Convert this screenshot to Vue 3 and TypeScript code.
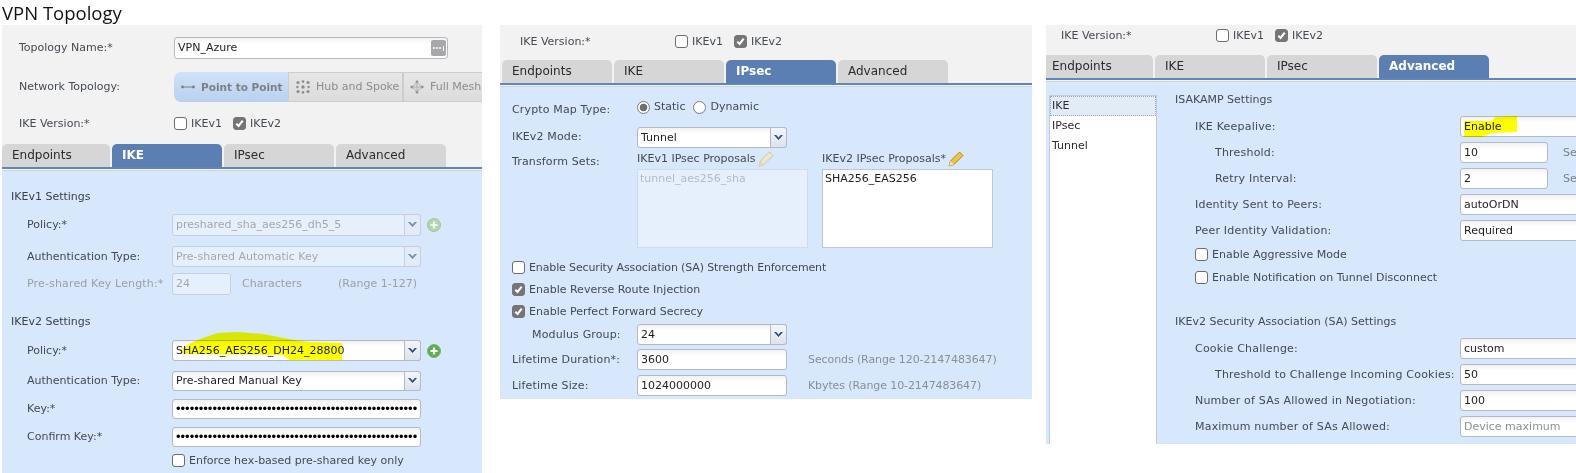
<script setup lang="ts">
const dots = '•'.repeat(53)
const tabNames = ['Endpoints', 'IKE', 'IPsec', 'Advanced']
</script>

<template>
  <div class="page">
    <!-- Panel 1 -->
    <section class="col col1">
      <h1 class="title">VPN Topology</h1>
      <div class="panel p1">
        <div class="head h1">
          <div class="hrow r-name">
            <span class="hlabel">Topology Name:*</span>
            <div class="field name"><span>VPN_Azure</span>
              <span class="more"><i></i><i></i><i></i><b></b></span>
            </div>
          </div>
          <div class="hrow r-net">
            <span class="hlabel">Network Topology:</span>
            <div class="seg">
              <span class="sg on">
                <svg width="14" height="6" viewBox="0 0 14 6"><path d="M1.500 3h11" stroke="#7a7f86" stroke-width="1"/><circle cx="1.500" cy="3" r="1.400" fill="#7a7f86"/><circle cx="12.500" cy="3" r="1.400" fill="#7a7f86"/></svg>
                Point to Point</span>
              <span class="sg hub">
                <svg width="14" height="14" viewBox="0 0 14 14" fill="#8e8e8e"><circle cx="7" cy="7" r="1.700"/><circle cx="2" cy="2.500" r="1.600"/><circle cx="7" cy="1.600" r="1.300"/><circle cx="12" cy="2.500" r="1.600"/><circle cx="2" cy="11.500" r="1.600"/><circle cx="7" cy="12.400" r="1.300"/><circle cx="12" cy="11.500" r="1.600"/><circle cx="1.400" cy="7" r="1.200"/><circle cx="12.600" cy="7" r="1.200"/></svg>
                Hub and Spoke</span>
              <span class="sg mesh">
                <svg width="14" height="14" viewBox="0 0 14 14"><path d="M7 2.500v9M2.500 7h9M2.500 7 7 2.500 11.500 7 7 11.500Z" fill="none" stroke="#a8a8a8" stroke-width=".9"/><path d="M7 0 9 2.500H5ZM7 14 9 11.500H5ZM0 7 2.500 5V9ZM14 7 11.500 5V9Z" fill="#8a8a8a"/></svg>
                Full Mesh</span>
            </div>
          </div>
          <div class="hrow r-ver">
            <span class="hlabel">IKE Version:*</span>
            <span class="ck"><i class="box"></i>IKEv1</span>
            <span class="ck"><i class="box on"><svg viewBox="0 0 12 12"><path d="M2.500 6.200 5 8.700 9.500 2.800" fill="none" stroke="#fff" stroke-width="2.200"/></svg></i>IKEv2</span>
          </div>
          <nav class="tabs">
            <span v-for="t in tabNames" :key="t" class="tab" :class="{ active: t === 'IKE' }">{{ t }}</span>
          </nav>
        </div>
        <div class="rule"></div>
        <div class="body b1">
          <div class="sect s1">IKEv1 Settings</div>
          <div class="frow m9 tall dim">
            <span class="flabel">Policy:*</span>
            <div class="field sel off w249"><span>preshared_sha_aes256_dh5_5</span><span class="caret"><svg width="9" height="6" viewBox="0 0 9 6"><path d="M0 0 4.500 5 9 0 6.800 0 4.500 2.600 2.200 0Z"/></svg></span></div>
            <svg class="plus" width="14" height="14" viewBox="0 0 14 14"><circle cx="7" cy="7" r="6.500" fill="#b5d3ad" stroke="#a3c49c"/><path d="M7 3.500v7M3.500 7h7" stroke="#eef6ec" stroke-width="2.200"/></svg>
          </div>
          <div class="frow m10">
            <span class="flabel">Authentication Type:</span>
            <div class="field sel off w249"><span>Pre-shared Automatic Key</span><span class="caret"><svg width="9" height="6" viewBox="0 0 9 6"><path d="M0 0 4.500 5 9 0 6.800 0 4.500 2.600 2.200 0Z"/></svg></span></div>
          </div>
          <div class="frow m6 tall">
            <span class="flabel muted">Pre-shared Key Length:*</span>
            <div class="field off w59"><span>24</span></div>
            <span class="hint chars">Characters</span>
            <span class="hint range">(Range 1-127)</span>
          </div>
          <div class="sect s2">IKEv2 Settings</div>
          <div class="frow m10">
            <span class="flabel">Policy:*</span>
            <div class="field sel w249 marked"><span>SHA256_AES256_DH24_28800</span><span class="caret"><svg width="9" height="6" viewBox="0 0 9 6"><path d="M0 0 4.500 5 9 0 6.800 0 4.500 2.600 2.200 0Z"/></svg></span>
              <svg class="marker mk1" width="160" height="30" viewBox="0 0 160 30"><path d="M0 17 8 12 20 7 35 2 55 1 80 3 105 8 125 11 159 12 159 29 107 29 100 24 0 23Z" fill="#ffff00"/></svg>
            </div>
            <svg class="plus" width="14" height="14" viewBox="0 0 14 14"><circle cx="7" cy="7" r="6.500" fill="#5fae4f" stroke="#7fae76"/><path d="M7 3.500v7M3.500 7h7" stroke="#fff" stroke-width="2.200"/></svg>
          </div>
          <div class="frow m10 h20">
            <span class="flabel">Authentication Type:</span>
            <div class="field sel w249"><span>Pre-shared Manual Key</span><span class="caret"><svg width="9" height="6" viewBox="0 0 9 6"><path d="M0 0 4.500 5 9 0 6.800 0 4.500 2.600 2.200 0Z"/></svg></span></div>
          </div>
          <div class="frow m8 h20">
            <span class="flabel">Key:*</span>
            <div class="field w249"><span class="dots">{{ dots }}</span></div>
          </div>
          <div class="frow m8 h20">
            <span class="flabel">Confirm Key:*</span>
            <div class="field w249"><span class="dots">{{ dots }}</span></div>
          </div>
          <div class="enforce"><span class="ck wide"><i class="box"></i>Enforce hex-based pre-shared key only</span></div>
        </div>
      </div>
    </section>

    <!-- Panel 2 -->
    <section class="col col2">
      <div class="panel p2">
        <div class="head h2">
          <div class="hrow r-ver">
            <span class="hlabel">IKE Version:*</span>
            <span class="ck"><i class="box"></i>IKEv1</span>
            <span class="ck"><i class="box on"><svg viewBox="0 0 12 12"><path d="M2.500 6.200 5 8.700 9.500 2.800" fill="none" stroke="#fff" stroke-width="2.200"/></svg></i>IKEv2</span>
          </div>
          <nav class="tabs">
            <span v-for="t in tabNames" :key="t" class="tab" :class="{ active: t === 'IPsec' }">{{ t }}</span>
          </nav>
        </div>
        <div class="rule"></div>
        <div class="body b2">
          <div class="grow crypto">
            <span class="glabel low">Crypto Map Type:</span>
            <span class="rd"><i class="radio on"></i>Static</span>
            <span class="rd"><i class="radio"></i>Dynamic</span>
          </div>
          <div class="grow m10">
            <span class="glabel up">IKEv2 Mode:</span>
            <div class="field sel w150"><span>Tunnel</span><span class="caret"><svg width="9" height="6" viewBox="0 0 9 6"><path d="M0 0 4.500 5 9 0 6.800 0 4.500 2.600 2.200 0Z"/></svg></span></div>
          </div>
          <div class="grow sets">
            <span class="glabel low">Transform Sets:</span>
            <div class="pick">
              <div class="pick-h">IKEv1 IPsec Proposals
                <svg width="16" height="16" viewBox="0 0 16 16"><path d="M1 15 2.500 10 11.500 1 15 4.500 6 13.500Z" fill="#efe6c8" stroke="#c9c4ae"/><path d="M1 15 2.500 10 6 13.500Z" fill="#e5d6b5"/></svg>
              </div>
              <div class="pick-b off">tunnel_aes256_sha</div>
            </div>
            <div class="pick second">
              <div class="pick-h">IKEv2 IPsec Proposals*
                <svg width="16" height="16" viewBox="0 0 16 16"><path d="M1 15 2.500 10 11.500 1 15 4.500 6 13.500Z" fill="#f3c33c" stroke="#a8862e"/><path d="M1 15 2.500 10 6 13.500Z" fill="#f3dfae"/></svg>
              </div>
              <div class="pick-b">SHA256_EAS256</div>
            </div>
          </div>
          <div class="line l1"><span class="ck wide tight"><i class="box"></i>Enable Security Association (SA) Strength Enforcement</span></div>
          <div class="line l2"><span class="ck wide"><i class="box on"><svg viewBox="0 0 12 12"><path d="M2.500 6.200 5 8.700 9.500 2.800" fill="none" stroke="#fff" stroke-width="2.200"/></svg></i>Enable Reverse Route Injection</span></div>
          <div class="line l2"><span class="ck wide"><i class="box on"><svg viewBox="0 0 12 12"><path d="M2.500 6.200 5 8.700 9.500 2.800" fill="none" stroke="#fff" stroke-width="2.200"/></svg></i>Enable Perfect Forward Secrecy</span></div>
          <div class="grow m4">
            <span class="glabel ind">Modulus Group:</span>
            <div class="field sel w150"><span>24</span><span class="caret"><svg width="9" height="6" viewBox="0 0 9 6"><path d="M0 0 4.500 5 9 0 6.800 0 4.500 2.600 2.200 0Z"/></svg></span></div>
          </div>
          <div class="grow m4">
            <span class="glabel">Lifetime Duration*:</span>
            <div class="field w150"><span>3600</span></div>
            <span class="hint after">Seconds (Range 120-2147483647)</span>
          </div>
          <div class="grow m5">
            <span class="glabel">Lifetime Size:</span>
            <div class="field w150"><span>1024000000</span></div>
            <span class="hint after">Kbytes (Range 10-2147483647)</span>
          </div>
        </div>
      </div>
    </section>

    <!-- Panel 3 -->
    <section class="col col3">
      <div class="panel p3">
        <div class="head h3">
          <div class="hrow r-ver">
            <span class="hlabel">IKE Version:*</span>
            <span class="ck"><i class="box"></i>IKEv1</span>
            <span class="ck"><i class="box on"><svg viewBox="0 0 12 12"><path d="M2.500 6.200 5 8.700 9.500 2.800" fill="none" stroke="#fff" stroke-width="2.200"/></svg></i>IKEv2</span>
          </div>
          <nav class="tabs">
            <span v-for="t in tabNames" :key="t" class="tab" :class="{ active: t === 'Advanced' }">{{ t }}</span>
          </nav>
        </div>
        <div class="rule"></div>
        <div class="body b3">
          <ul class="side">
            <li class="cur">IKE</li>
            <li>IPsec</li>
            <li>Tunnel</li>
          </ul>
          <div class="adv">
            <div class="sect-a">ISAKAMP Settings</div>
            <div class="arow first">
              <span class="alabel">IKE Keepalive:</span>
              <div class="field wfull marked"><span>Enable</span>
                <svg class="marker mk2" width="54" height="22" viewBox="0 0 54 22"><path d="M0 5 28 5 31 1 53 0 53 16 28 17 18 21 0 21Z" fill="#ffff00"/></svg>
              </div>
            </div>
            <div class="arow">
              <span class="alabel sub">Threshold:</span>
              <div class="field w88"><span>10</span></div>
              <span class="hint sec">Seconds</span>
            </div>
            <div class="arow">
              <span class="alabel sub">Retry Interval:</span>
              <div class="field w88"><span>2</span></div>
              <span class="hint sec">Seconds</span>
            </div>
            <div class="arow">
              <span class="alabel">Identity Sent to Peers:</span>
              <div class="field wfull"><span>autoOrDN</span></div>
            </div>
            <div class="arow">
              <span class="alabel">Peer Identity Validation:</span>
              <div class="field wfull"><span>Required</span></div>
            </div>
            <div class="aline a1"><span class="ck wide"><i class="box"></i>Enable Aggressive Mode</span></div>
            <div class="aline a2"><span class="ck wide"><i class="box"></i>Enable Notification on Tunnel Disconnect</span></div>
            <div class="sect-a s3">IKEv2 Security Association (SA) Settings</div>
            <div class="arow first">
              <span class="alabel">Cookie Challenge:</span>
              <div class="field wfull"><span>custom</span></div>
            </div>
            <div class="arow">
              <span class="alabel sub">Threshold to Challenge Incoming Cookies:</span>
              <div class="field wfull"><span>50</span></div>
            </div>
            <div class="arow">
              <span class="alabel">Number of SAs Allowed in Negotiation:</span>
              <div class="field wfull"><span>100</span></div>
            </div>
            <div class="arow">
              <span class="alabel">Maximum number of SAs Allowed:</span>
              <div class="field wfull"><span class="ph">Device maximum</span></div>
            </div>
          </div>
        </div>
      </div>
    </section>
  </div>
</template>

<style>
html, body { margin: 0; background: #fff; }
</style>

<style scoped>
.page {
  width: 1576px;
  height: 473px;
  display: flex;
  overflow: hidden;
  background: #fff;
  font: 11px/16px "DejaVu Sans", Verdana, sans-serif;
  color: #444a52;
}
.col { flex: none; }
.col1 { width: 500px; }
.col2 { width: 532px; padding-top: 25px; }
.col3 { width: 530px; margin-left: 14px; padding-top: 25px; }
.title {
  margin: 0;
  height: 25px;
  padding-left: 2px;
  font: 400 18.500px/25px "Open Sans", sans-serif;
  color: #111;
}
.panel { overflow: hidden; }
.p1 { width: 480px; margin-left: 2px; height: 448px; }
.head { background: #f2f2f2; }
.h1 { padding-top: 12px; }
.h2 { padding-top: 9px; }
.h3 { padding-top: 3px; }
.hrow { display: flex; align-items: center; padding-left: 17px; }
.h2 .hrow { padding-left: 20px; }
.h3 .hrow { padding-left: 15px; }
.hlabel { width: 155px; flex: none; }
.r-name { height: 22px; }
.r-net { height: 30px; margin-top: 13px; }
.r-ver { height: 16px; }
.h1 .r-ver { margin-top: 14px; }

.seg { display: flex; height: 30px; flex: none; white-space: nowrap; }
.sg {
  box-sizing: border-box;
  flex: none;
  height: 30px;
  display: flex;
  align-items: center;
  gap: 6px;
  color: #8d8d8d;
  background: linear-gradient(#e6e6e6, #dcdcdc);
  border: 1px solid #cdcdcd;
}
.sg.on {
  width: 114px;
  padding-left: 7px;
  border: 0;
  border-radius: 7px 0 0 7px;
  background: linear-gradient(#d0e2f8, #b8d1ee);
  color: #7d8186;
  font-size: 10.500px;
  font-weight: 700;
}
.sg.hub { width: 115px; padding-left: 7px; }
.sg.mesh { width: 90px; padding-left: 6px; }

.ck { display: inline-flex; align-items: center; width: 59px; color: #444a52; white-space: nowrap; }
.ck.wide { width: auto; }
.ck.tight { letter-spacing: -.13px; }
.box {
  flex: none;
  box-sizing: border-box;
  width: 13px;
  height: 13px;
  margin-right: 4px;
  border: 1px solid #6c6c6c;
  border-radius: 3px;
  background: #fff;
  display: inline-block;
  position: relative;
  top: -1px;
}
.box.on { background: #757575; border-color: #757575; }
.box svg { display: block; width: 11px; height: 11px; }

.tabs { display: flex; height: 23px; margin-top: 12px; gap: 2px; overflow: hidden; }
.h2 .tabs { padding-left: 2px; margin-top: 10px; }
.h3 .tabs { margin-top: 11px; }
.tab {
  flex: none;
  box-sizing: border-box;
  width: 110px;
  height: 23px;
  padding-left: 10px;
  font-size: 12px;
  line-height: 23px;
  color: #2b2b2b;
  background: #d6d6d6;
  border-radius: 5px 5px 0 0;
}
.p1 .tab:first-child { width: 108px; }
.p3 .tab:first-child { border-top-left-radius: 0; width: 107px; padding-left: 6px; }
.tab.active { background: #5b7fb3; color: #fff; font-weight: 700; }
.rule { height: 5px; background: linear-gradient(#5f86ba 0 2px, #f1f4f8 2px 3px, #d0d3d8 3px 4px, #d7e7fc 4px); }

.body { background: #d7e7fc; }
.b1 { height: 301px; padding: 0 0 0 9px; }
.b2 { height: 311px; padding-left: 12px; box-sizing: border-box; }
.b3 { height: 361px; display: flex; padding-left: 3px; }
.sect { height: 16px; color: #3c4148; }
.s1 { padding-top: 17px; }
.s2 { margin-top: 19px; }
.frow { display: flex; align-items: center; height: 21px; padding-left: 16px; }
.frow.tall { height: 22px; }
.frow.h20 { height: 20px; }
.m9 { margin-top: 9px; }
.m10 { margin-top: 10px; }
.m6 { margin-top: 6px; }
.m8 { margin-top: 8px; }
.m4 { margin-top: 4px; }
.m5 { margin-top: 5px; }
.flabel { width: 145px; flex: none; white-space: nowrap; }
.flabel.muted { color: #9aa0a8; letter-spacing: .15px; }
.enforce { margin: 6px 0 0 161px; }

.field {
  position: relative;
  box-sizing: border-box;
  flex: none;
  height: 100%;
  display: flex;
  align-items: center;
  padding-left: 3px;
  border: 1px solid #b4b9c6;
  border-radius: 3px;
  background: linear-gradient(#f1f1f1, #fff 6px);
  color: #1d1d1d;
  white-space: nowrap;
  overflow: visible;
}
.field.off { background: #e6f0fd; border-color: #c3d0e2; color: #a3a8ae; }
.name { width: 274px; height: 22px; font-size: 11px; }
.more {
  position: absolute;
  right: 1px;
  top: 2px;
  width: 15px;
  height: 16px;
  background: #a8a8a8;
  border-radius: 2px;
  display: flex;
  align-items: center;
  justify-content: center;
  gap: 1px;
}
.more i { width: 2px; height: 2px; border-radius: 50%; background: #fff; }
.more b { width: 1px; height: 5px; background: #fff; margin-left: 1px; }
.w249 { width: 249px; }
.w150 { width: 150px; }
.w59 { width: 59px; }
.w88 { width: 88px; }
.wfull { width: 140px; }
.caret {
  position: absolute;
  right: -1px;
  top: -1px;
  bottom: -1px;
  width: 17px;
  box-sizing: border-box;
  border: 1px solid #b4b9c6;
  border-radius: 0 3px 3px 0;
  background: linear-gradient(#f3f5f9, #dde3ec);
  display: flex;
  align-items: center;
  justify-content: center;
}
.caret svg { fill: #2b4a80; }
.off .caret { background: #e3ebf6; border-color: #c3d0e2; }
.off .caret svg { fill: #6f8ab0; }
.plus { margin-left: 6px; flex: none; }
.dots { font: 13px/16px "Liberation Sans", sans-serif; color: #000; }
.hint { color: #8a8f96; white-space: nowrap; }
.frow .hint { color: #9aa0a8; }
.chars { margin-left: 11px; }
.range { margin-left: 36px; }

.marker { position: absolute; pointer-events: none; mix-blend-mode: multiply; }
.mk1 { left: 10px; top: -10px; }
.mk2 { left: 3px; top: -1px; }

.grow { display: flex; align-items: center; height: 21px; }
.glabel { width: 125px; flex: none; white-space: nowrap; box-sizing: border-box; letter-spacing: .15px; }
.glabel.up { padding-bottom: 2px; }
.glabel.low { padding-top: 3px; align-self: flex-start; }
.glabel.ind { padding-left: 20px; }
.crypto { height: 18px; padding-top: 11px; align-items: flex-start; }
.rd { display: inline-flex; align-items: center; margin-right: 8px; color: #444a52; }
.radio {
  box-sizing: border-box;
  width: 13px;
  height: 13px;
  margin-right: 4px;
  border: 1px solid #7c7c7c;
  border-radius: 50%;
  background: #fff;
  display: inline-block;
}
.radio.on { background: radial-gradient(circle, #6f6f6f 0 3.500px, #fff 4.200px); }
.sets { height: auto; margin-top: 3px; align-items: flex-start; }
.pick { width: 171px; flex: none; }
.pick.second { margin-left: 14px; }
.pick-h { display: flex; align-items: center; gap: 2px; height: 16px; white-space: nowrap; }
.pick-b {
  box-sizing: border-box;
  height: 79px;
  margin-top: 2px;
  padding: 1px 2px;
  background: #fff;
  border: 1px solid #bcc7d6;
  color: #1d1d1d;
}
.pick-b.off { background: #e6f0fd; border-color: #cfdcee; color: #b5bac1; }
.line { height: 16px; }
.l1 { margin-top: 12px; }
.l2 { margin-top: 6px; }
.after { margin-left: 21px; letter-spacing: -.1px; }

.side {
  flex: none;
  box-sizing: border-box;
  width: 108px;
  margin: 12px 0 0;
  padding: 0;
  list-style: none;
  background: #fff;
  border: 1px solid #c0cce0;
  border-bottom: 0;
  color: #2b2b2b;
}
.side li { height: 20px; line-height: 20px; padding-left: 2px; }
.side .cur { background: #e3ebf7; outline: 1px dotted #9aa6bb; outline-offset: -1px; }
.adv { padding: 9px 0 0 18px; flex: 1; min-width: 0; overflow: hidden; }
.sect-a { height: 16px; }
.s3 { margin-top: 28px; }
.arow { display: flex; align-items: center; height: 21px; margin-top: 5px; padding-left: 20px; }
.arow.first { margin-top: 8px; }
.alabel { width: 265px; flex: none; white-space: nowrap; box-sizing: border-box; letter-spacing: .2px; }
.alabel.sub { padding-left: 20px; }
.sec { margin-left: 15px; color: #7c8188; }
.ph { color: #8a8f96; }
.aline { height: 16px; padding-left: 20px; }
.a1 { margin-top: 6px; }
.a2 { margin-top: 7px; }
</style>
